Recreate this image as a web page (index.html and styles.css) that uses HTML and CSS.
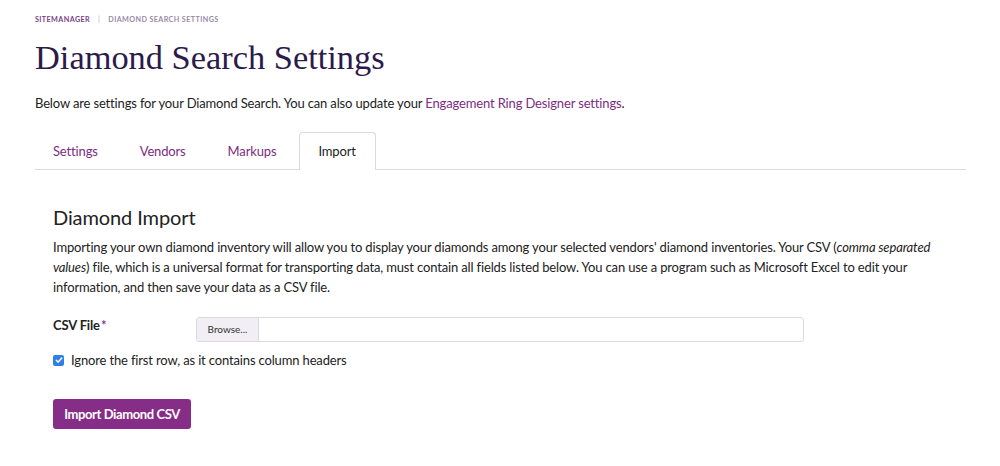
FILE: index.html
```html
<!DOCTYPE html>
<html>
<head>
<meta charset="utf-8">
<link rel="stylesheet" href="styles.css">
</head>
<body>
<div class="page">
  <nav class="crumbs"><span class="crumb-root">SITEMANAGER</span><span class="crumb-sep">|</span><span class="crumb-cur">DIAMOND SEARCH SETTINGS</span></nav>
  <h1 class="title">Diamond Search Settings</h1>
  <p class="intro">Below are settings for your Diamond Search. You can also update your <a class="link" href="#">Engagement Ring Designer settings</a>.</p>
  <div class="tabs">
    <a class="tab" href="#">Settings</a>
    <a class="tab" href="#">Vendors</a>
    <a class="tab" href="#">Markups</a>
    <a class="tab active" href="#">Import</a>
  </div>
  <section class="panel">
    <h2 class="panel-title">Diamond Import</h2>
    <p class="desc">Importing your own diamond inventory will allow you to display your diamonds among your selected vendors' diamond inventories. Your CSV (<span class="it">comma separated values</span>) file, which is a universal format for transporting data, must contain all fields listed below. You can use a program such as Microsoft Excel to edit your information, and then save your data as a CSV file.</p>
    <div class="field">
      <label class="field-label">CSV File<span class="req">*</span></label>
      <div class="file-input"><span class="browse">Browse...</span><span class="file-name"></span></div>
    </div>
    <label class="check"><span class="box"><svg width="10" height="10" viewBox="0 0 10 10"><path d="M2.3 5.2 L4.2 7.1 L7.8 3" fill="none" stroke="#fff" stroke-width="1.5" stroke-linecap="round" stroke-linejoin="round"/></svg></span>Ignore the first row, as it contains column headers</label>
    <button class="btn">Import Diamond CSV</button>
  </section>
</div>
</body>
</html>
```
FILE: styles.css
```css
* { box-sizing: border-box; }
html, body { margin: 0; padding: 0; background: #fff; }
body { font-family: "Lato", "Liberation Sans", sans-serif; color: #222; letter-spacing: -0.15px; }
.page { padding: 15px 34px 0 35px; }
.crumbs { font-size: 7.2px; font-weight: 700; letter-spacing: 0.4px; height: 10px; line-height: 10px; color: #9a8aa6; }
.crumb-root { color: #7a3f86; }
.crumb-sep { margin: 0 8px; color: #b0a8b8; font-weight: 400; }
.title { font-family: "Liberation Serif", "DejaVu Serif", serif; font-weight: 400; font-size: 34.4px; color: #2b1a4c; margin: 12px 0 0; line-height: 40px; letter-spacing: 0; }
.intro { font-size: 13px; margin: 17px 0 0; line-height: 18px; color: #222; }
.link { color: #7b2d82; text-decoration: none; }
.tabs { display: flex; margin-top: 20px; border-bottom: 1px solid #ddd8e2; height: 38px; }
.tab { font-size: 13px; color: #7b2d82; text-decoration: none; padding: 0 22px 0 18px; line-height: 36px; border: 1px solid transparent; border-bottom: none; border-radius: 4px 4px 0 0; }
.tab:first-child { margin-left: -1px; }
.tab.active { color: #222; border-color: #ddd8e2; background: #fff; margin-bottom: -1px; height: 38px; padding: 0 19px 0 18px; }
.panel { padding: 35px 0 0 18px; }
.panel-title { font-size: 20px; font-weight: 400; margin: 0; line-height: 24px; color: #222; letter-spacing: -0.1px; }
.desc { font-size: 13px; line-height: 20px; margin: 8px 0 0; color: #222; }
.it { font-style: italic; }
.field { display: flex; align-items: flex-start; margin-top: 20px; }
.field-label { width: 143px; font-size: 13px; font-weight: 700; line-height: 16px; }
.req { color: #8a3e96; margin-left: 1px; }
.file-input { display: flex; width: 608px; height: 25px; border: 1px solid #dcd8e2; border-radius: 3px; overflow: hidden; }
.browse { width: 62px; background: #f1eff4; border-right: 1px solid #dcd8e2; font-size: 10px; line-height: 23px; text-align: center; color: #333; letter-spacing: 0; }
.file-name { flex: 1; }
.check { display: flex; align-items: center; font-size: 13px; margin-top: 10px; color: #222; }
.box { width: 11px; height: 11px; background: #2f7fe6; border-radius: 2px; margin-right: 7px; display: flex; align-items: center; justify-content: center; }
.btn { display: block; margin-top: 31px; background: #862d88; color: #fff; border: none; border-radius: 3px; font-family: inherit; font-weight: 700; font-size: 13px; width: 138px; height: 30px; padding: 0; letter-spacing: -0.4px; }
```
